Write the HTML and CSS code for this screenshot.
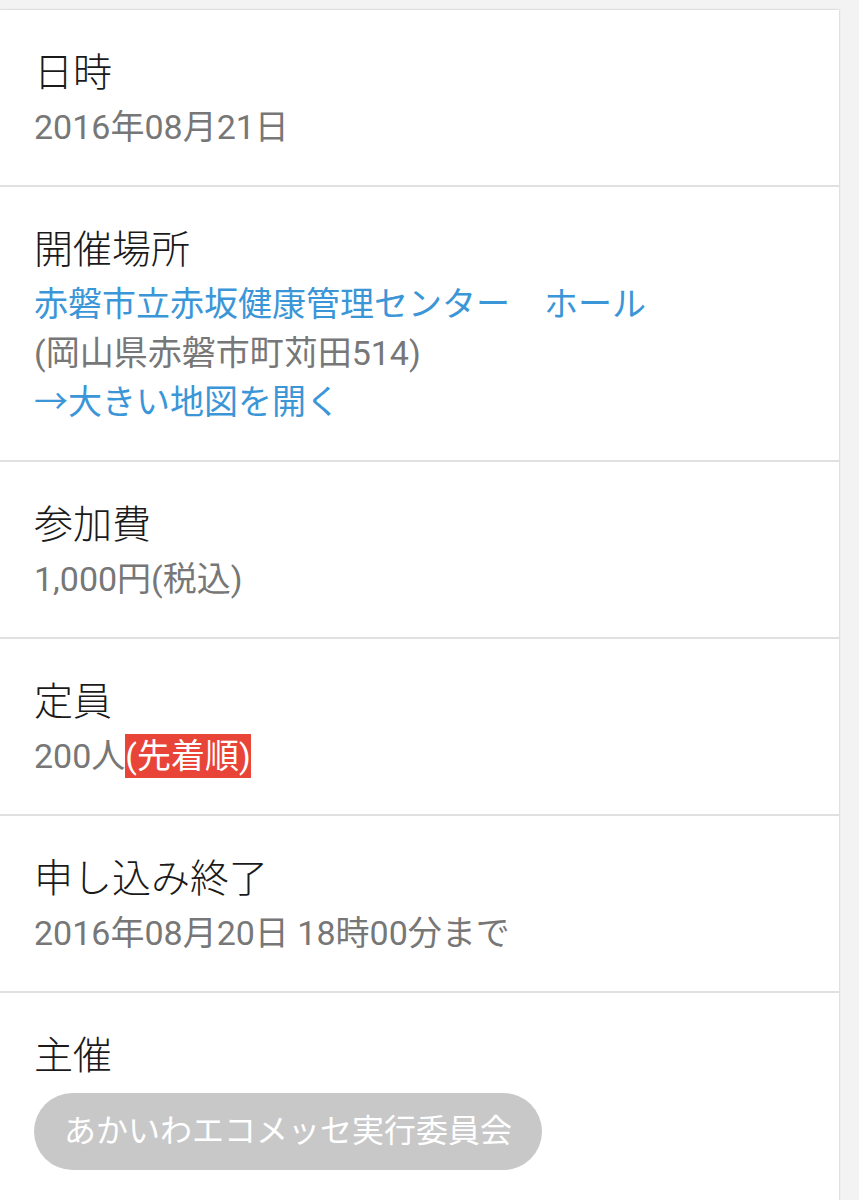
FILE: index.html
```html
<!DOCTYPE html>
<html lang="ja">
<head>
    <meta charset="UTF-8">
    <meta name="viewport" content="width=device-width, initial-scale=1.0">
    <title>イベント詳細</title>
    <link rel="stylesheet" href="styles.css">
</head>
<body>
    <div class="card">
        <div class="item">
            <div class="label">日時</div>
            <div class="value">2016年08月21日</div>
        </div>

        <div class="item">
            <div class="label">開催場所</div>
            <div class="value"><a class="link" href="#">赤磐市立赤坂健康管理センター　ホール</a></div>
            <div class="value">(岡山県赤磐市町苅田514)</div>
            <div class="value"><a class="link" href="#">→大きい地図を開く</a></div>
        </div>

        <div class="item">
            <div class="label">参加費</div>
            <div class="value">1,000円(税込)</div>
        </div>

        <div class="item">
            <div class="label">定員</div>
            <div class="value">200人<span class="mark">(先着順)</span></div>
        </div>

        <div class="item">
            <div class="label">申し込み終了</div>
            <div class="value">2016年08月20日 18時00分まで</div>
        </div>

        <div class="item">
            <div class="label">主催</div>
            <div class="chips">
                <span class="chip">あかいわエコメッセ実行委員会</span>
            </div>
        </div>
    </div>
</body>
</html>
```

FILE: styles.css
```css
body {
    margin: 0;
    padding-top: 10px;
    background-color: #f3f3f3;
    font-family: Roboto, "Noto Sans CJK JP", sans-serif;
}
.card {
    width: 839px;
    background-color: #fff;
    box-shadow: 0 0 2px rgba(0, 0, 0, 0.25);
}
.item {
    padding: 39px 34px 33px 34px;
    border-bottom: 2px solid #e0e0e0;
}
.item:last-child {
    border-bottom: none;
}
.label {
    font-size: 39px;
    line-height: 48px;
    font-weight: 300;
    color: #1a1a1a;
    margin-bottom: 6px;
}
.value {
    font-size: 34px;
    line-height: 49px;
    color: #777;
}
.link {
    color: #3b96d8;
    text-decoration: none;
}
.mark {
    display: inline-block;
    line-height: 44px;
    background-color: #e84438;
    color: #fff;
}
.chips {
    margin-top: 13px;
}
.chip {
    display: inline-block;
    font-size: 32px;
    line-height: 77px;
    padding: 0 30px;
    border-radius: 39px;
    background-color: #c8c8c8;
    color: #fff;
}
```
